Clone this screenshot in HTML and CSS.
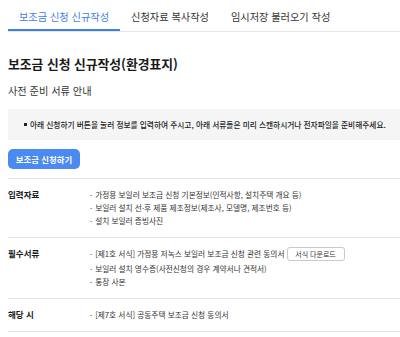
FILE: index.html
```html
<!DOCTYPE html>
<html lang="ko">
<head>
<meta charset="utf-8">
<link rel="stylesheet" href="styles.css">
</head>
<body>
<div class="page">
  <nav class="tabs">
    <a class="tab active">보조금 신청 신규작성</a>
    <a class="tab">신청자료 복사작성</a>
    <a class="tab">임시저장 불러오기 작성</a>
  </nav>
  <h1 class="title">보조금 신청 신규작성(환경표지)</h1>
  <p class="subtitle">사전 준비 서류 안내</p>
  <div class="notice">
    <span class="square"></span>
    <span>아래 신청하기 버튼을 눌러 정보를 입력하여 주시고, 아래 서류들은 미리 스캔하시거나 전자파일을 준비해주세요.</span>
  </div>
  <button class="apply">보조금 신청하기</button>
  <div class="rows">
    <div class="row">
      <div class="label">입력자료</div>
      <ul class="items">
        <li>가정용 보일러 보조금 신청 기본정보(인적사항, 설치주택 개요 등)</li>
        <li>보일러 설치 선·후 제품 제조정보(제조사, 모델명, 제조번호 등)</li>
        <li>설치 보일러 증빙사진</li>
      </ul>
    </div>
    <div class="row">
      <div class="label">필수서류</div>
      <ul class="items">
        <li class="with-btn">[제1호 서식] 가정용 저녹스 보일러 보조금 신청 관련 동의서<button class="dl">서식 다운로드</button></li>
        <li>보일러 설치 영수증(사전신청의 경우 계약서나 견적서)</li>
        <li>통장 사본</li>
      </ul>
    </div>
    <div class="row">
      <div class="label">해당 시</div>
      <ul class="items">
        <li>[제7호 서식] 공동주택 보조금 신청 동의서</li>
      </ul>
    </div>
  </div>
</div>
</body>
</html>
```

FILE: styles.css
```css
html, body {
  margin: 0;
  padding: 0;
  background: #fff;
}
body {
  font-family: "Noto Sans CJK KR", "Noto Sans", sans-serif;
  color: #222;
  overflow: hidden;
}
.page {
  padding-left: 8px;
}
.tabs {
  display: flex;
  border-bottom: 1px solid #e6e6e6;
  height: 31px;
}
.tab {
  font-size: 10.2px;
  line-height: 14px;
  padding: 10px 11px 5px;
  height: 14px;
  color: #333;
  border-bottom: 2px solid transparent;
  white-space: nowrap;
}
.tab.active {
  color: #3f80e4;
  border-bottom-color: #3f80e4;
}
.title {
  margin: 23px 0 0;
  font-size: 12.8px;
  line-height: 18px;
  font-weight: 700;
  color: #1a1a1a;
}
.subtitle {
  margin: 11px 0 0;
  font-size: 10.2px;
  line-height: 14px;
  color: #333;
}
.notice {
  margin-top: 11px;
  background: #f5f5f5;
  height: 31px;
  display: flex;
  align-items: center;
  padding-left: 16px;
  font-size: 7.7px;
  font-weight: 500;
  color: #222;
  white-space: nowrap;
  overflow: hidden;
}
.square {
  flex: none;
  width: 3px;
  height: 3px;
  background: #222;
  margin-right: 3px;
}
.apply {
  display: block;
  margin-top: 9px;
  width: 72px;
  height: 20px;
  border: 0;
  border-radius: 5px;
  background: #4b8af3;
  color: #fff;
  font-family: inherit;
  font-size: 8.4px;
  font-weight: 700;
  padding: 0;
}
.rows {
  margin-top: 9px;
}
.row {
  display: flex;
  border-top: 1px solid #e2e2e2;
  padding: 9px 0 10px;
}
.row:last-child {
  border-bottom: 1px solid #e2e2e2;
}
.label {
  width: 82px;
  flex: none;
  font-size: 8.5px;
  line-height: 13px;
  font-weight: 700;
  color: #1a1a1a;
}
.items {
  list-style: none;
  margin: 0;
  padding: 0;
  font-size: 7.7px;
  line-height: 13px;
  color: #333;
  white-space: nowrap;
}
.items li::before {
  content: "·";
  margin-right: 3px;
}
.items li.with-btn {
  display: flex;
  align-items: center;
  height: 15px;
  margin-top: -1px;
  margin-bottom: 1px;
}
.dl {
  margin-left: 2px;
  height: 14px;
  width: 58px;
  padding: 0;
  border: 1px solid #c9c9c9;
  border-radius: 3px;
  background: #fff;
  font-family: inherit;
  font-size: 7px;
  color: #333;
}
```
